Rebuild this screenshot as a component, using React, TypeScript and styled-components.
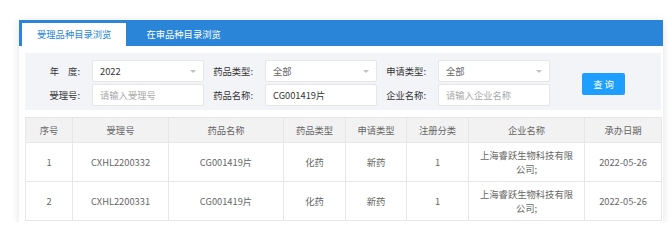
import React from 'react'
import styled, { createGlobalStyle } from 'styled-components'

const GlobalStyle = createGlobalStyle`
  html, body {
    margin: 0;
    padding: 0;
    background: #fff;
  }
  body {
    font-family: "Noto Sans CJK SC", "Noto Sans", sans-serif;
    font-size: 9.3px;
    color: #333;
  }
`

const Page = styled.div`
  padding: 20px 9px 0 19px;
`

const Card = styled.div`
  width: 644px;
  box-sizing: border-box;
  background: #fff;
  padding: 0 2px 2px 0;
  box-shadow: 0 1px 8px rgba(0, 0, 0, 0.12);
`

const TabBar = styled.div`
  display: flex;
  align-items: flex-end;
  height: 26px;
  padding-left: 3px;
  background: #2a85d8;
  margin-right: -2px;
`

const Tab = styled.div<{ $active?: boolean }>`
  height: 23px;
  line-height: 23px;
  padding: 0 15px;
  margin-right: 5px;
  white-space: nowrap;
  color: ${({ $active }) => ($active ? '#2a85d8' : '#fff')};
  background: ${({ $active }) => ($active ? '#fff' : 'transparent')};
`

const Body = styled.div`
  padding: 7px 0 0 6px;
`

const FilterPanel = styled.div`
  display: grid;
  grid-template-columns: 67px 112px 61px 112px 61px 112px 1fr;
  grid-template-rows: 22px 22px;
  row-gap: 2px;
  align-items: center;
  padding: 7px 0 4px;
  background: #f3f4f8;
`

const Label = styled.div`
  text-align: right;
  padding-right: 12px;
  white-space: nowrap;
  color: #333;
`

const Spaced = styled.span`
  letter-spacing: 9px;
`

const Field = styled.div<{ $muted?: boolean; $placeholder?: boolean }>`
  position: relative;
  height: 22px;
  line-height: 20px;
  box-sizing: border-box;
  padding: 0 7px;
  border: 1px solid #e6e6e6;
  border-radius: 2px;
  background: #fff;
  white-space: nowrap;
  color: ${({ $placeholder, $muted }) => ($placeholder ? '#a9a9a9' : $muted ? '#666' : '#333')};
`

const Caret = styled.span`
  position: absolute;
  right: 7px;
  top: 9px;
  width: 0;
  height: 0;
  border-left: 3.5px solid transparent;
  border-right: 3.5px solid transparent;
  border-top: 3.5px solid #c2c2c2;
`

const ButtonCell = styled.div`
  grid-column: 7;
  grid-row: 1 / span 2;
  display: flex;
  align-items: center;
  padding-left: 32px;
  padding-top: 2px;
`

const QueryButton = styled.button`
  width: 43px;
  height: 22px;
  border: none;
  border-radius: 2px;
  background: #1e9fff;
  color: #fff;
  font-family: inherit;
  font-size: 9.3px;
  letter-spacing: 2px;
  padding: 0 0 0 2px;
`

const Table = styled.table`
  width: 636px;
  margin-top: 7px;
  border-collapse: collapse;
  table-layout: fixed;
`

const Th = styled.th`
  height: 24px;
  padding: 0;
  font-weight: normal;
  color: #666;
  background: #f2f2f2;
  border: 1px solid #e6e6e6;
  text-align: center;
`

const Td = styled.td`
  height: 38px;
  padding: 0 10px;
  line-height: 14px;
  color: #666;
  border: 1px solid #e6e6e6;
  text-align: center;
`

const columns = [
  { title: '序号', width: 47 },
  { title: '受理号', width: 96 },
  { title: '药品名称', width: 115 },
  { title: '药品类型', width: 62 },
  { title: '申请类型', width: 61 },
  { title: '注册分类', width: 62 },
  { title: '企业名称', width: 116 },
  { title: '承办日期', width: 77 },
]

const rows = [
  ['1', 'CXHL2200332', 'CG001419片', '化药', '新药', '1', '上海睿跃生物科技有限公司;', '2022-05-26'],
  ['2', 'CXHL2200331', 'CG001419片', '化药', '新药', '1', '上海睿跃生物科技有限公司;', '2022-05-26'],
]

export default function App() {
  return (
    <Page>
      <GlobalStyle />
      <Card>
        <TabBar>
          <Tab $active>受理品种目录浏览</Tab>
          <Tab>在审品种目录浏览</Tab>
        </TabBar>
        <Body>
          <FilterPanel>
            <Label>
              <Spaced>年</Spaced>度:
            </Label>
            <Field>
              2022
              <Caret />
            </Field>
            <Label>药品类型:</Label>
            <Field $muted>
              全部
              <Caret />
            </Field>
            <Label>申请类型:</Label>
            <Field $muted>
              全部
              <Caret />
            </Field>
            <ButtonCell>
              <QueryButton>查询</QueryButton>
            </ButtonCell>
            <Label>受理号:</Label>
            <Field $placeholder>请输入受理号</Field>
            <Label>药品名称:</Label>
            <Field>CG001419片</Field>
            <Label>企业名称:</Label>
            <Field $placeholder>请输入企业名称</Field>
          </FilterPanel>
          <Table>
            <colgroup>
              {columns.map((c) => (
                <col key={c.title} style={{ width: c.width }} />
              ))}
            </colgroup>
            <thead>
              <tr>
                {columns.map((c) => (
                  <Th key={c.title}>{c.title}</Th>
                ))}
              </tr>
            </thead>
            <tbody>
              {rows.map((r) => (
                <tr key={r[0]}>
                  {r.map((v, i) => (
                    <Td key={i}>{v}</Td>
                  ))}
                </tr>
              ))}
            </tbody>
          </Table>
        </Body>
      </Card>
    </Page>
  )
}
